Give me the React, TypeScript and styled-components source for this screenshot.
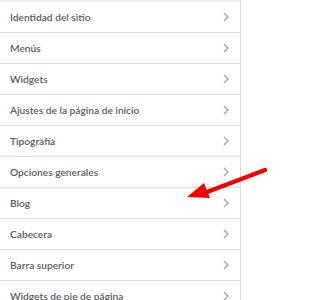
import styled, {createGlobalStyle} from 'styled-components';

const items = [
    'Identidad del sitio',
    'Menús',
    'Widgets',
    'Ajustes de la página de inicio',
    'Tipografía',
    'Opciones generales',
    'Blog',
    'Cabecera',
    'Barra superior',
    'Widgets de pie de página',
];

const App = () => {
    return <Page>
        <GlobalStyle/>
        <Panel>
            <TopBand/>
            {items.map(label => (
                <Row key={label}>
                    <Label>{label}</Label>
                    <Chevron viewBox="0 0 6 10" aria-hidden>
                        <path d="M1 1 L5 5 L1 9" fill="none" stroke="currentColor" strokeWidth="1.4"/>
                    </Chevron>
                </Row>
            ))}
        </Panel>
        <Arrow viewBox="0 0 100 60">
            <line x1="78" y1="10" x2="20" y2="32" stroke="#f20000" strokeWidth="4.5" strokeLinecap="round"/>
            <polygon points="0,37 17,23 23,38" fill="#f20000"/>
        </Arrow>
    </Page>;
};

export default App;



const GlobalStyle = createGlobalStyle`
    body {
        margin: 0;
        background: #fff;
        font-family: Lato, "Liberation Sans", sans-serif;
    }
`;

const Page = styled.div`
    position: relative;
    width: 326px;
    height: 300px;
    overflow: hidden;
    background: #fff;
`;

const Panel = styled.div`
    width: 240px;
    border-right: 1px solid #dddddd;
    display: flex;
    flex-direction: column;
`;

const TopBand = styled.div`
    height: 2px;
    background: #eeeeee;
`;

const Row = styled.div`
    height: 30px;
    border-bottom: 1px solid #dddddd;
    display: flex;
    align-items: center;
    justify-content: space-between;
    padding: 0 11px 0 10px;
`;

const Label = styled.span`
    font-size: 10.2px;
    font-weight: 600;
    color: #555d66;
`;

const Chevron = styled.svg`
    width: 6px;
    height: 10px;
    color: #a0a5aa;
`;

const Arrow = styled.svg`
    position: absolute;
    left: 187px;
    top: 160px;
    width: 100px;
    height: 60px;
`;
